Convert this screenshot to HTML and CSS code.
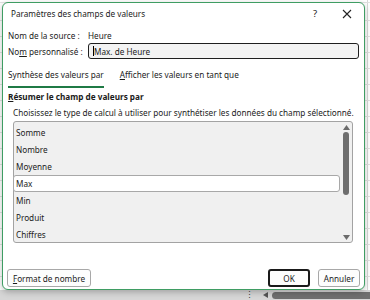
FILE: index.html
```html
<!DOCTYPE html>
<html lang="fr">
<head>
<meta charset="utf-8">
<link rel="stylesheet" href="styles.css">
</head>
<body>
<div class="screen">
  <div class="main">
    <div class="dialog">
      <div class="titlebar">
        <span class="title">Paramètres des champs de valeurs</span>
        <span class="tb-help">?</span>
        <span class="tb-close">
          <svg width="10" height="10" viewBox="0 0 10 10"><path d="M1 1L9 9M9 1L1 9" stroke="#222" stroke-width="1.1" fill="none"/></svg>
        </span>
      </div>
      <div class="row src">
        <span class="lbl">Nom de la source :</span>
        <span class="val">Heure</span>
      </div>
      <div class="row name">
        <span class="lbl">No<u>m</u> personnalisé :</span>
        <div class="input"><span class="caret"></span>Max. de Heure</div>
      </div>
      <div class="tabs">
        <span class="tab active">Synthèse des valeurs par</span>
        <span class="tab"><u>A</u>fficher les valeurs en tant que</span>
      </div>
      <div class="section"><u>R</u>ésumer le champ de valeurs par</div>
      <div class="hint">Choisissez le type de calcul à utiliser pour synthétiser les données du champ sélectionné.</div>
      <div class="list">
        <div class="items">
          <div class="item">Somme</div>
          <div class="item">Nombre</div>
          <div class="item">Moyenne</div>
          <div class="item selected">Max</div>
          <div class="item">Min</div>
          <div class="item">Produit</div>
          <div class="item">Chiffres</div>
        </div>
        <div class="scroll">
          <svg width="7" height="5" viewBox="0 0 7 5"><path d="M3.5 0L7 5H0Z" fill="#6b6b6b"/></svg>
          <div class="track"><div class="thumb"></div></div>
          <svg width="7" height="5" viewBox="0 0 7 5"><path d="M0 0H7L3.5 5Z" fill="#6b6b6b"/></svg>
        </div>
      </div>
      <div class="buttons">
        <span class="btn fmt"><u>F</u>ormat de nombre</span>
        <span class="spacer"></span>
        <span class="btn ok">OK</span>
        <span class="btn cancel">Annuler</span>
      </div>
    </div>
    <div class="sheet"></div>
  </div>
  <div class="statusbar">
    <span class="dots">⋮</span>
    <span class="arrow">
      <svg width="5" height="6" viewBox="0 0 5 6"><path d="M5 0V6L0 3Z" fill="#555"/></svg>
    </span>
    <span class="hthumb"></span>
  </div>
</div>
</body>
</html>
```
FILE: styles.css
```css
* { box-sizing: border-box; }
html, body { margin: 0; padding: 0; }
body {
  width: 370px;
  height: 300px;
  overflow: hidden;
  font-family: "Noto Sans", "Open Sans", sans-serif;
  font-size: 8.2px;
  color: #1b1b1b;
  background: #ffffff;
}
.screen {
  width: 370px;
  height: 300px;
  display: flex;
  flex-direction: column;
}
.main {
  height: 290px;
  display: flex;
  background-color: #ffffff;
  background-image:
    repeating-linear-gradient(to bottom, transparent 0, transparent 15px, #e1e1e1 15px, #e1e1e1 16px),
    linear-gradient(to right, transparent 367px, #d8d8d8 367px, #d8d8d8 368px, transparent 368px);
  background-position: 0 5px, 0 0;
}
.dialog {
  margin: 2px 0 0 2px;
  width: 363px;
  height: 288px;
  border: 1px solid #3f9d63;
  border-radius: 6px;
  background: #ffffff;
  box-shadow: 0 2px 6px rgba(0,0,0,0.25);
  display: flex;
  flex-direction: column;
  padding: 0 0 0 5px;
  position: relative;
  z-index: 1;
}
.titlebar {
  height: 21px;
  display: flex;
  align-items: center;
  padding-left: 3px;
}
.title { flex: 1; }
.tb-help { width: 12px; margin-right: 17px; font-size: 9.5px; }
.tb-close { width: 10px; margin-right: 12px; display: flex; }
.row {
  display: flex;
  align-items: center;
  height: 16px;
  white-space: nowrap;
}
.src { margin-top: 3px; }
.lbl { width: 80px; flex: none; }
.input {
  width: 271px;
  height: 16px;
  border: 1.5px solid #1f1f1f;
  border-radius: 3px;
  background: #f3f3f3;
  display: flex;
  align-items: center;
  padding-left: 4px;
}
.caret {
  width: 1px;
  height: 10px;
  background: #000;
}
.tabs {
  margin-top: 7px;
  display: flex;
  gap: 16px;
  white-space: nowrap;
}
.tab {
  line-height: 16px;
  padding-top: 1px;
  padding-bottom: 3px;
  border-bottom: 2px solid transparent;
}
.tab.active { border-bottom-color: #1f7a45; }
.section {
  margin-top: 1px;
  line-height: 16px;
  font-weight: bold;
}
.hint {
  line-height: 16px;
  padding-left: 5px;
  white-space: nowrap;
}
.list {
  margin-left: 5px;
  width: 340px;
  height: 122px;
  border: 1px solid #a3a3a3;
  border-radius: 3px;
  background: #f0f0f0;
  display: flex;
}
.items {
  flex: 1;
  padding-top: 2px;
}
.item {
  height: 17px;
  line-height: 17px;
  padding-left: 2px;
}
.item.selected {
  margin-left: -1px;
  background: #ffffff;
  border: 1px solid #a8a8a8;
  border-radius: 3px;
  line-height: 15px;
  padding-left: 2px;
}
.scroll {
  width: 12px;
  display: flex;
  flex-direction: column;
  align-items: center;
  padding: 3px 0 2px;
}
.track {
  flex: 1;
  width: 100%;
  display: flex;
  justify-content: center;
  padding-top: 2px;
}
.thumb {
  width: 6px;
  height: 63px;
  border-radius: 3px;
  background: #6e6e6e;
}
.buttons {
  margin-top: 26px;
  display: flex;
  padding-right: 4px;
}
.btn {
  height: 18px;
  border: 1px solid #a8a8a8;
  border-radius: 3px;
  background: #fdfdfd;
  display: flex;
  align-items: center;
  justify-content: center;
  white-space: nowrap;
}
.fmt { width: 84px; margin-left: -1px; }
.spacer { flex: 1; }
.ok { width: 42px; border: 2px solid #1a1a1a; margin-right: 8px; }
.cancel { width: 42px; }
.sheet { flex: 1; }
.statusbar {
  height: 10px;
  background: #d6d6d6;
  display: flex;
  align-items: center;
}
.dots { margin-left: 245px; width: 8px; font-size: 9px; color: #444; line-height: 10px; }
.arrow { margin-left: 10px; display: flex; }
.hthumb {
  margin-left: 4px;
  flex: 1;
  height: 7px;
  border-radius: 4px 0 0 4px;
  background: #6f6f6f;
}
```
